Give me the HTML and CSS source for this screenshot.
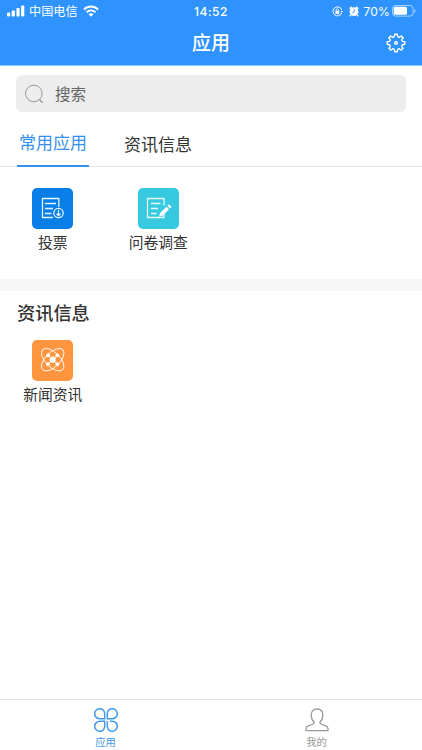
FILE: index.html
```html
<!DOCTYPE html>
<html lang="zh-CN">
<head>
<meta charset="utf-8">
<title>应用</title>
<link rel="stylesheet" href="styles.css">
</head>
<body>
<header class="header">
  <div class="status">
    <div class="status-left">
      <svg class="signal" width="18" height="12" viewBox="0 0 18 12" fill="#fff"><rect x="0" y="7.5" width="3.2" height="4" rx="1"/><rect x="4.7" y="5.5" width="3.2" height="6" rx="1"/><rect x="9.4" y="3" width="3.2" height="8.5" rx="1"/><rect x="14.1" y="0.5" width="3.2" height="11" rx="1"/></svg>
      <span class="carrier">中国电信</span>
      <svg class="wifi" width="16" height="12" viewBox="0 0 16 12" fill="none" stroke="#fff" stroke-width="2"><path d="M1 4.6C5 .6 11 .6 15 4.6M3.6 7.3C6.2 4.8 9.8 4.8 12.4 7.3"/><path d="M5.5 9.2C7 7.8 9 7.8 10.5 9.2L8 11.7Z" fill="#fff" stroke="none"/></svg>
    </div>
    <span class="time">14:52</span>
    <div class="status-right">
      <svg width="11" height="11" viewBox="0 0 11 11" fill="none" stroke="#fff"><path d="M9.8 4A4.5 4.5 0 1 0 9.7 7"/><path d="M8.4 5H11L9.8 6.8Z" fill="#fff" stroke="none"/><rect x="3.4" y="4.8" width="3.8" height="3.1" fill="#fff" stroke="none"/><path d="M4.2 5V3.8a1.1 1.1 0 0 1 2.2 0V5" stroke-width=".8"/></svg>
      <svg class="alarm" width="10" height="11" viewBox="0 0 10 11"><circle cx="5" cy="5.7" r="4.4" fill="#fff"/><path d="M.6 2.8 2.8.9M9.4 2.8 7.2.9M1.8 9l-.9 1.2M8.2 9l.9 1.2" stroke="#fff" stroke-width="1.5"/><path d="M5.2 3.2V6L3.3 7" fill="none" stroke="#2e93ff" stroke-width=".9"/></svg>
      <span class="percent">70%</span>
      <svg class="battery" width="24" height="12" viewBox="0 0 24 12"><rect x=".5" y=".5" width="20.6" height="10.6" rx="3" fill="none" stroke="#a5d0ff"/><rect x="1.7" y="1.8" width="13.3" height="8" rx="1.5" fill="#fff"/><path d="M22.2 4v3.8q1.3-.6 1.3-1.9T22.2 4Z" fill="#a5d0ff"/></svg>
    </div>
  </div>
  <div class="nav">
    <h1 class="title">应用</h1>
    <svg class="gear" width="20" height="20" viewBox="0 0 20 20" fill="none" stroke="#fff" stroke-width="1.4" stroke-linejoin="round"><path d="M8.3 3.7 8.7 1.3h2.6l.4 2.4 1.6.7 2-1.4 1.8 1.8-1.4 2 .7 1.6 2.4.4v2.5l-2.4.4-.7 1.6 1.4 2-1.8 1.8-2-1.4-1.6.7-.4 2.4H8.7l-.4-2.4-1.6-.7-2 1.4-1.8-1.8 1.4-2-.7-1.6-2.4-.4V8.8l2.4-.4.7-1.6-1.4-2L4.7 3l2 1.4Z"/><circle cx="10" cy="10" r="1.3"/></svg>
  </div>
</header>
<main class="content">
  <div class="search">
    <svg width="19" height="20" viewBox="0 0 19 20" fill="none" stroke="#999" stroke-width="1"><circle cx="8.8" cy="9.5" r="8.3"/><path d="m14.4 15.5 3.1 3.3" stroke-width="1.3"/></svg>
    <span>搜索</span>
  </div>
  <nav class="tabs">
    <span class="tab active">常用应用</span>
    <span class="tab">资讯信息</span>
  </nav>
  <section class="apps">
    <div class="app">
      <svg class="tile blue" viewBox="0 0 41 41" fill="none" stroke="#e5f3ff" stroke-width="1.3"><path d="M26.8 19V10.5H10.5v19H21M13 15.5h11M13 20.5h8M13 25.5h6.5"/><circle cx="26.5" cy="25" r="4.7"/><path d="M26.5 22v5.7m-2-2 2 2 2-2"/></svg>
      <span class="label">投票</span>
    </div>
    <div class="app">
      <svg class="tile cyan" viewBox="0 0 41 41" fill="none" stroke="#e5fbff" stroke-width="1.3"><path d="M26 17.5v-7H9.5v19H26V26M13 15.5h9.5M13 20.5h7M13 25.5h5.5"/><path d="m21 28.8 1.2-4 6.3-6.1 2.6 2.6-6.3 6.2Z" fill="#fff" stroke="none"/><path d="m29.4 17.8 1.6-1.5 2.5 2.6-1.5 1.6Z" fill="#fff" stroke="none"/></svg>
      <span class="label">问卷调查</span>
    </div>
  </section>
  <div class="divider"></div>
  <h2 class="heading">资讯信息</h2>
  <section class="apps news">
    <div class="app">
      <svg class="tile orange" viewBox="0 0 41 41" fill="none" stroke="#fff" stroke-width=".9"><ellipse cx="20.7" cy="19.7" rx="14.2" ry="7.2" transform="rotate(45 20.7 19.7)"/><ellipse cx="20.7" cy="19.7" rx="14.2" ry="7.2" transform="rotate(-45 20.7 19.7)"/><path d="m16 15 9.4 9.4m0-9.4L16 24.4"/><g fill="#fff" stroke="none"><circle cx="20.7" cy="19.7" r="3.1"/><circle cx="16" cy="15.3" r="1.9"/><circle cx="25.3" cy="15.3" r="1.9"/><circle cx="16" cy="24.2" r="1.9"/><circle cx="25.3" cy="24.2" r="1.9"/></g></svg>
      <span class="label">新闻资讯</span>
    </div>
  </section>
</main>
<footer class="tabbar">
  <div class="item selected">
    <svg width="24" height="24" viewBox="0 0 24 24" fill="none" stroke="currentColor" stroke-width="1.5"><path d="M10.7 10.7H6A5 5 0 1 1 10.7 6ZM13.3 10.7H18A5 5 0 1 0 13.3 6ZM10.7 13.3H6A5 5 0 1 0 10.7 18ZM16 13.3H18A5 5 0 1 1 13.3 18V13.3"/></svg>
    <span>应用</span>
  </div>
  <div class="item">
    <svg width="24" height="24" viewBox="0 0 24 24" fill="none" stroke="currentColor" stroke-width="1.3" stroke-linejoin="round"><path d="M9.2 14.2C7.3 12.5 6.2 10 6.2 7.2 6.2 3.5 8.4 1 12 1s5.8 2.5 5.8 6.2c0 2.8-1.1 5.3-3 7 .1 1.3.6 1.8 2 2.3l4 1.3c1.5.5 2.1 1.4 2.2 2.7v2.2H1v-2.2c.1-1.3.7-2.2 2.2-2.7l4-1.3c1.4-.5 1.9-1 2-2.3Z"/></svg>
    <span>我的</span>
  </div>
</footer>
</body>
</html>
```
FILE: styles.css
```css
* { box-sizing: border-box; }
body {
  margin: 0;
  height: 750px;
  display: flex;
  flex-direction: column;
  overflow: hidden;
  background: #fff;
  color: #333;
  font-family: Inter, "Noto Sans CJK SC", sans-serif;
}
svg { display: block; flex: none; }
h1, h2 { margin: 0; }
.header { height: 66px; background: #2e93ff; color: #fff; border-bottom: 1px solid #8cc6ff; }
.status {
  height: 22px;
  display: grid;
  grid-template-columns: 1fr auto 1fr;
  align-items: center;
  padding: 0 7px;
  font-size: 12px;
  line-height: 22px;
}
.status-left, .status-right { display: flex; align-items: center; }
.status-right { justify-content: flex-end; }
.signal { margin-bottom: 1px; }
.carrier { margin-left: 4px; font-size: 12.2px; line-height: 22px; padding-top: 1px; }
.wifi { margin-left: 5px; margin-bottom: 2px; }
.time { font-size: 12px; font-weight: 500; letter-spacing: .5px; }
.alarm { margin-left: 6px; }
.percent { margin: 0 2px 0 4px; letter-spacing: .2px; }
.battery { margin-right: -1px; margin-bottom: 1px; }
.nav {
  height: 43px;
  display: grid;
  grid-template-columns: 1fr auto 1fr;
  align-items: center;
  padding: 0 16px;
}
.title { grid-column: 2; font-size: 19px; font-weight: 500; line-height: 43px; height: 43px; }
.gear { justify-self: end; margin-bottom: 1px; }
.content { flex: 1; }
.search {
  height: 37px;
  margin: 9px 16px 0;
  padding: 0 9px;
  display: flex;
  align-items: center;
  gap: 11px;
  border-radius: 6px;
  background: #ededed;
  color: #666;
  font-size: 15.6px;
}
.search span { padding-bottom: 1px; }
.tabs {
  height: 55px;
  padding-left: 17px;
  display: flex;
  align-items: flex-end;
  gap: 35px;
  border-bottom: 1px solid #e6e6e6;
}
.tab { height: 43px; line-height: 45px; font-size: 17px; }
.tab.active {
  width: 72px;
  height: 46px;
  line-height: 45px;
  margin-bottom: -1px;
  text-align: center;
  color: #348fee;
  border-bottom: 2px solid #348fee;
}
.apps { height: 112px; padding-top: 21px; display: flex; }
.app { width: 105.5px; display: flex; flex-direction: column; align-items: center; }
.tile { width: 41px; height: 41px; border-radius: 5px; }
.blue { background: #087fe8; }
.cyan { background: #36c9df; }
.orange { background: #ff963f; }
.label { margin-top: 3px; font-size: 14.8px; line-height: 22px; }
.divider { height: 12px; background: #f7f7f7; }
.heading { padding-left: 17px; font-size: 18.2px; font-weight: 500; line-height: 44px; height: 44px; }
.news { padding-top: 5px; }
.tabbar { height: 51px; display: flex; border-top: 1px solid #e6e6e6; }
.item {
  flex: 1;
  display: flex;
  flex-direction: column;
  align-items: center;
  padding-top: 8px;
  color: #999;
  font-size: 10.3px;
  line-height: 20px;
}
.selected { color: #4299e8; }
```
